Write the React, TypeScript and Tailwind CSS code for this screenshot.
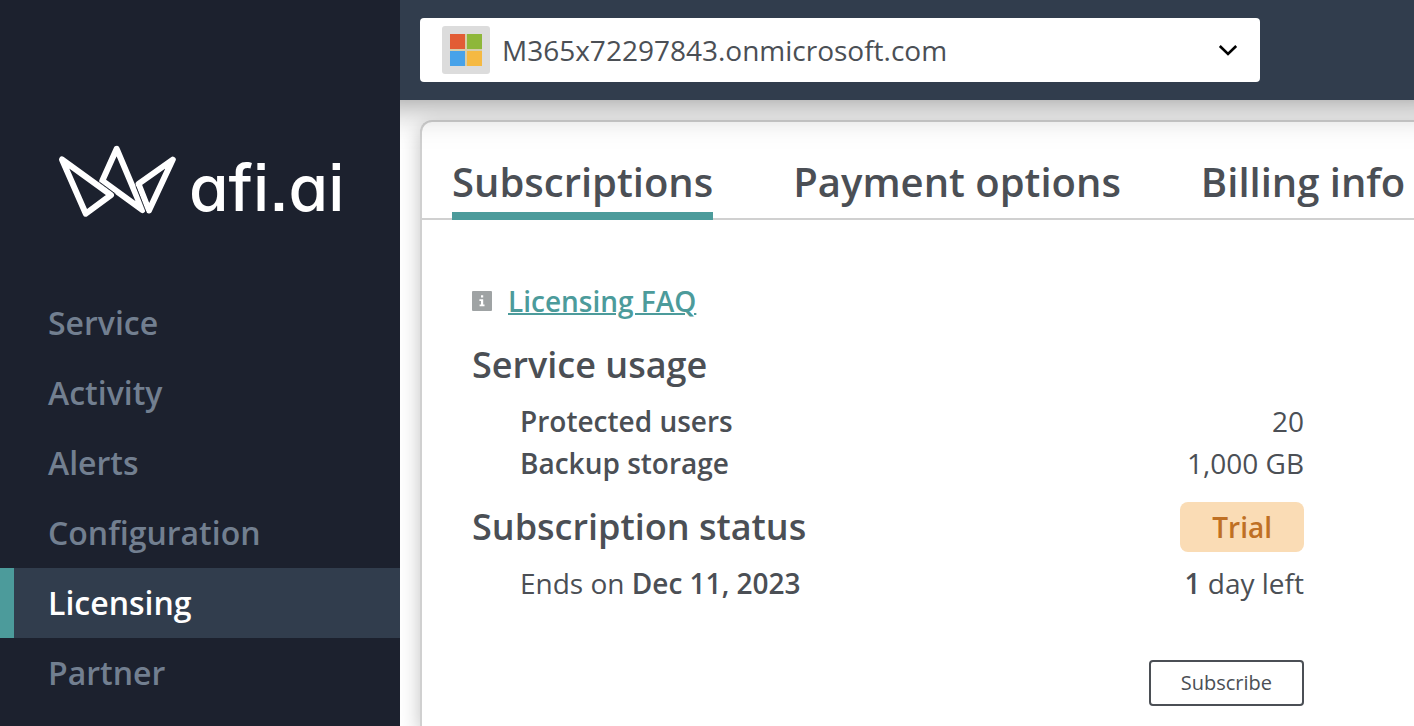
import { useState } from 'react';
import clsx from 'clsx';

const NAV_ITEMS = ['Service', 'Activity', 'Alerts', 'Configuration', 'Licensing', 'Partner'];
const TABS = ['Subscriptions', 'Payment options', 'Billing info'];
const TENANTS = ['M365x72297843.onmicrosoft.com'];

function Logo() {
  return (
    <a href="#" className="mt-[145px] ml-[57px] flex h-[74px] items-start text-white">
      <svg
        width="120"
        height="74"
        viewBox="0 0 120 74"
        fill="none"
        stroke="currentColor"
        strokeWidth="6"
        strokeLinejoin="round"
        aria-hidden="true"
      >
        <path d="M5 14.5 L28.8 68.7 L54 50 Z" />
        <path d="M59.7 3.8 L45.3 35.8 L85.5 65 Z" />
        <path d="M115.8 14.6 L81.5 38.9 L92 65.5 Z" />
        <path d="M43 37.5 L58.5 49 M79 41.5 L89 67" stroke="#1c212e" strokeWidth="0.9" />
      </svg>
      <span className="ml-3 font-[Inter,sans-serif] text-[64px] leading-[86px] font-medium [font-feature-settings:'cv11','ss07']">
        afi.ai
      </span>
    </a>
  );
}

function Sidebar() {
  const [active, setActive] = useState('Licensing');

  return (
    <aside className="relative z-20 w-[400px] shrink-0 bg-[#1c212e]">
      <Logo />
      <nav className="mt-[69px]">
        <ul>
          {NAV_ITEMS.map((item) => (
            <li key={item}>
              <a
                href="#"
                onClick={() => setActive(item)}
                className={clsx(
                  'flex h-[70px] items-center border-l-[14px] pl-[34px] text-[32px] font-semibold',
                  item === active
                    ? 'border-[#4c9b9b] bg-[#313d4d] text-white'
                    : 'border-transparent text-[#727f90]'
                )}
              >
                {item}
              </a>
            </li>
          ))}
        </ul>
      </nav>
    </aside>
  );
}

function MicrosoftIcon() {
  return (
    <svg width="48" height="48" viewBox="0 0 48 48" aria-hidden="true">
      <rect width="48" height="48" rx="3" fill="#dcdcdc" />
      <rect x="8" y="8" width="32" height="32" fill="#d6cdaa" />
      <rect x="8" y="8" width="15" height="15" fill="#e25c35" />
      <rect x="25" y="8" width="15" height="15" fill="#8eb73a" />
      <rect x="8" y="25" width="15" height="15" fill="#47a2e9" />
      <rect x="25" y="25" width="15" height="15" fill="#f5b942" />
    </svg>
  );
}

function TenantBar() {
  // runs past both edges so that its shadow stays even
  return (
    <header className="relative z-10 -mx-10 flex h-[100px] items-center bg-[#313d4d] px-[60px] shadow-[0_0_40px_rgba(0,0,0,0.5)]">
      <div className="grid h-16 w-full max-w-[840px] items-center rounded bg-white">
        <span className="pointer-events-none col-start-1 row-start-1 ml-[22px]">
          <MicrosoftIcon />
        </span>
        <select
          aria-label="Tenant"
          className="col-start-1 row-start-1 h-16 w-full appearance-none bg-transparent pr-16 pl-[82px] text-[28px]"
        >
          {TENANTS.map((tenant) => (
            <option key={tenant}>{tenant}</option>
          ))}
        </select>
        <svg
          width="20"
          height="12"
          viewBox="0 0 20 12"
          fill="none"
          stroke="#000"
          strokeWidth="2.6"
          className="pointer-events-none col-start-1 row-start-1 mr-[22px] justify-self-end"
          aria-hidden="true"
        >
          <path d="M1.8 2 L10 10 L18.2 2" />
        </svg>
      </div>
    </header>
  );
}

function InfoIcon() {
  return (
    <svg width="20" height="20" viewBox="0 0 20 20" aria-hidden="true">
      <rect width="20" height="20" rx="1" fill="#9fa3a4" />
      <path d="M9 4.3h2.2v2.2H9zM7.4 8.2h3.8v5.2h1.3v1.9H7.6v-1.9H9V10H7.4z" fill="#fff" />
    </svg>
  );
}

function Subscriptions() {
  return (
    <section className="max-w-[932px] px-[50px] pt-[60px] text-[28px] leading-[42px]">
      <div className="flex items-center gap-4">
        <InfoIcon />
        <a href="#" className="font-semibold text-[#4c9b9b] underline decoration-2">
          Licensing FAQ
        </a>
      </div>

      <h2 className="mt-[18px] text-[36px] leading-[50px] font-semibold">Service usage</h2>
      <dl className="mt-2.5 pl-12">
        <div className="flex justify-between">
          <dt className="font-semibold">Protected users</dt>
          <dd>20</dd>
        </div>
        <div className="flex justify-between">
          <dt className="font-semibold">Backup storage</dt>
          <dd>1,000 GB</dd>
        </div>
      </dl>

      <div className="mt-[18px] flex items-center justify-between">
        <h2 className="text-[36px] leading-[50px] font-semibold">Subscription status</h2>
        <span className="rounded-lg bg-[#fadcb5] px-8 text-[28px] leading-[50px] font-semibold text-[#bf7024]">
          Trial
        </span>
      </div>
      <div className="mt-2.5 flex justify-between pl-12">
        <p>
          Ends on <strong className="font-semibold">Dec 11, 2023</strong>
        </p>
        <p>
          <strong className="font-semibold">1</strong> day left
        </p>
      </div>

      <div className="mt-14 flex justify-end">
        <button
          type="button"
          className="h-[46px] rounded border-2 border-[#4b4f55] px-[30px] text-[20px] leading-[42px]"
        >
          Subscribe
        </button>
      </div>
    </section>
  );
}

export default function App() {
  const [tab, setTab] = useState('Subscriptions');

  return (
    <div className="flex min-h-screen overflow-hidden bg-white font-['Open_Sans',sans-serif] text-[#4b4f55]">
      <Sidebar />
      <div className="flex min-w-0 flex-1 flex-col">
        <TenantBar />
        <main className="mt-5 -mr-10 ml-5 flex-1 rounded-tl-xl border-t-2 border-l-2 border-[#d0d0d0] bg-white shadow-[0_6px_20px_rgba(0,0,0,0.25)]">
          <div role="tablist" className="flex gap-20 border-b-2 border-[#d0d0d0] pt-6 pl-[30px]">
            {TABS.map((name) => (
              <button
                key={name}
                type="button"
                role="tab"
                aria-selected={name === tab}
                onClick={() => setTab(name)}
                className={clsx(
                  '-mb-0.5 h-[74px] shrink-0 border-b-8 pt-1.5 text-[40px] leading-[60px] font-semibold whitespace-nowrap',
                  name === tab ? 'border-[#4c9b9b]' : 'border-transparent'
                )}
              >
                {name}
              </button>
            ))}
          </div>
          <Subscriptions />
        </main>
      </div>
    </div>
  );
}
